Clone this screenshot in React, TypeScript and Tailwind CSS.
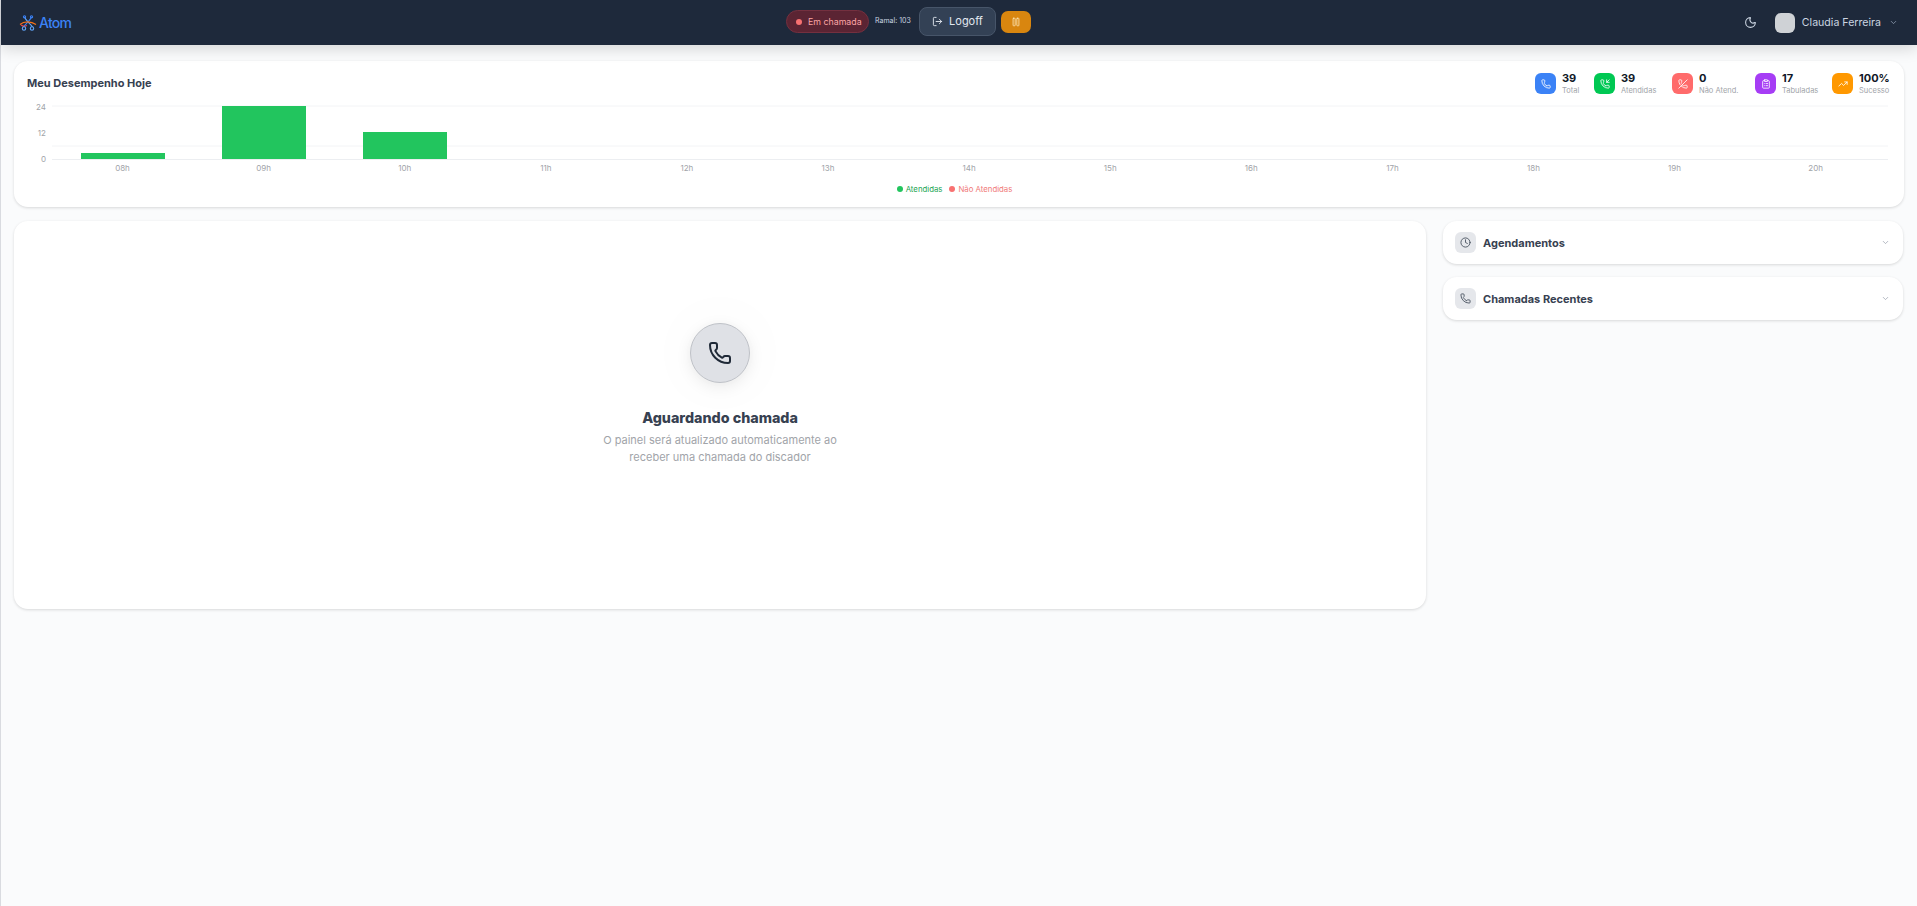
import { Phone, PhoneIncoming, PhoneOff, ClipboardList, TrendingUp, Clock, ChevronDown, Moon, LogOut, Pause } from "lucide-react";

const stats = [
  { v: "39", l: "Total", c: "bg-[#3b82f6]", I: Phone, w: "w-[59px]" },
  { v: "39", l: "Atendidas", c: "bg-[#00c853]", I: PhoneIncoming, w: "w-[78px]" },
  { v: "0", l: "Não Atend.", c: "bg-[#ff6b6b]", I: PhoneOff, w: "w-[83px]" },
  { v: "17", l: "Tabuladas", c: "bg-[#a63df5]", I: ClipboardList, w: "w-[77px]" },
  { v: "100%", l: "Sucesso", c: "bg-[#ff9800]", I: TrendingUp, w: "w-[58px]" },
];

const hours = ["08h", "09h", "10h", "11h", "12h", "13h", "14h", "15h", "16h", "17h", "18h", "19h", "20h"];
const bars = [
  { x: 81, y: 153, h: 6 },
  { x: 222, y: 106, h: 53 },
  { x: 363, y: 132, h: 27 },
];

function Logo() {
  return (
    <svg width="18" height="16" viewBox="0 0 18 16" fill="none" strokeWidth="1.1">
      <path d="M5.5 2 C7 6 11 8 13.5 12" stroke="#60a5fa" />
      <path d="M12.5 2 C11 6 7 8 4.5 12" stroke="#3b82f6" />
      <path d="M1 9.5c4-3.5 11-3.5 16 0" stroke="#f97316" />
      <path d="M2 10c2 1.5 4 1.5 6 .5" stroke="#ef4444" />
      <circle cx="5" cy="13.5" r="1.7" stroke="#60a5fa" />
      <circle cx="13" cy="13.5" r="1.7" stroke="#60a5fa" />
      <circle cx="5.5" cy="1.8" r="1.1" stroke="#3b82f6" />
      <circle cx="12.5" cy="1.8" r="1.1" stroke="#3b82f6" />
    </svg>
  );
}

function Chart() {
  return (
    <svg width="1864" height="84" viewBox="0 0 1864 84" className="block" style={{ fontFamily: "Inter, sans-serif" }}>
      <g transform="translate(-27 -100)">
        <line x1="52" x2="1888" y1="106" y2="106" stroke="#f3f4f6" />
        <line x1="52" x2="1888" y1="146" y2="146" stroke="#f3f4f6" />
        <line x1="52" x2="1888" y1="159.5" y2="159.5" stroke="#eceef1" />
        {bars.map((b) => (
          <rect key={b.x} x={b.x} y={b.y} width="84" height={b.h} fill="#22c55e" />
        ))}
        <text x="46" y="110" textAnchor="end" fontSize="8" fill="#a1a4a9">24</text>
        <text x="46" y="136" textAnchor="end" fontSize="8" fill="#a1a4a9">12</text>
        <text x="46" y="162" textAnchor="end" fontSize="8" fill="#a1a4a9">0</text>
        {hours.map((h, i) => (
          <text key={h} x={122.5 + i * 141.1} y="171" textAnchor="middle" fontSize="8" fill="#a1a4a9">{h}</text>
        ))}
      </g>
    </svg>
  );
}

export default function App() {
  return (
    <div className="min-h-[906px] bg-[#fafbfc] border-l border-l-[#d9dbe0] font-['Inter',sans-serif] text-[#1f2937]">
      <header className="relative h-[45px] bg-[#1e293b] shadow-[0_4px_14px_rgba(0,0,0,0.15)] flex items-center justify-between pl-[18px] pr-[19px]">
        <div className="flex items-center gap-[2px] w-[300px]">
          <Logo />
          <span className="text-[14px] font-medium tracking-[-0.7px] text-[#3b82f6] leading-none">Atom</span>
        </div>
        <div className="absolute left-[785px] top-[7px] flex items-center">
          <div className="flex items-center gap-[6px] h-[23px] w-[83px] pl-[9px] rounded-full bg-[#5b2433] border border-[#74303f] text-[8.8px] text-[#fca5a5] whitespace-nowrap">
            <span className="w-[6px] h-[6px] rounded-full bg-[#f87171] shrink-0"></span>
            Em chamada
          </div>
          <span className="ml-[6px] text-[7px] text-[#cbd5e1] w-[38px] whitespace-nowrap">Ramal: 103</span>
          <div className="flex items-center justify-center gap-[6px] ml-[6px] w-[77px] h-[29px] rounded-[8px] bg-[#334155] border border-[#475569] text-[11px] text-[#e2e8f0]">
            <LogOut size={11} />
            Logoff
          </div>
          <div className="ml-[5px] w-[30px] h-[22px] rounded-[7px] bg-[#d9860f] flex items-center justify-center">
            <Pause size={10} className="text-[#fde6b8]" />
          </div>
        </div>
        <div className="flex items-center">
          <Moon size={13} className="text-[#cbd5e1]" />
          <div className="ml-[18px] w-[20px] h-[20px] rounded-[6px] bg-[#cfd2d6]"></div>
          <span className="ml-[7px] text-[10.6px] text-[#cbd5e1]">Claudia Ferreira</span>
          <ChevronDown size={9} className="ml-[8px] text-[#94a3b8]" />
        </div>
      </header>

      <main className="pt-[16px] pl-[13px] pr-[13px]">
        <section className="h-[146px] bg-white rounded-[14px] shadow-[0_1px_3px_rgba(0,0,0,0.14)] pt-[11px] pl-[13px] pr-[12px]">
          <div className="flex items-start justify-between h-[28px]">
            <h2 className="mt-[4px] text-[11px] font-bold text-[#374151] leading-[14px]">Meu Desempenho Hoje</h2>
            <div className="flex mr-[2px] mt-[1px]">
              {stats.map((s) => (
                <div key={s.l} className={`flex ${s.w}`}>
                  <div className={`w-[21px] h-[21px] rounded-[6px] flex items-center justify-center ${s.c}`}>
                    <s.I size={10} className="text-white" />
                  </div>
                  <div className="ml-[6px]">
                    <div className="text-[11px] font-bold leading-[13px] text-[#111827] mt-[-1px]">{s.v}</div>
                    <div className="text-[7.5px] leading-[10px] mt-[1px] text-[#a1a4a9] whitespace-nowrap">{s.l}</div>
                  </div>
                </div>
              ))}
            </div>
          </div>
          <Chart />
          <div className="flex items-center justify-center gap-[7px] pr-[10px] text-[7.8px] leading-[10px]">
            <span className="flex items-center gap-[3px] text-[#22a553]">
              <span className="w-[6px] h-[6px] rounded-full bg-[#22c55e]"></span>Atendidas
            </span>
            <span className="flex items-center gap-[3px] text-[#f07a7a]">
              <span className="w-[6px] h-[6px] rounded-full bg-[#f87171]"></span>Não Atendidas
            </span>
          </div>
        </section>

        <div className="flex items-start gap-[17px] mt-[14px]">
          <section className="w-[1412px] h-[388px] bg-white rounded-[14px] shadow-[0_1px_3px_rgba(0,0,0,0.14)] flex flex-col items-center pt-[102px]">
            <div className="w-[60px] h-[60px] rounded-full bg-[#dfe1e6] border border-[#bfc2c8] shadow-[0_4px_16px_rgba(0,0,0,0.08),0_0_70px_rgba(0,0,0,0.035)] flex items-center justify-center">
              <Phone size={24} className="text-[#1f2937]" />
            </div>
            <h3 className="mt-[26px] text-[14.3px] font-extrabold leading-[18px] text-[#374151]">Aguardando chamada</h3>
            <p className="mt-[5px] w-[260px] text-center text-[11px] leading-[17px] text-[#a1a4a9]">
              O painel será atualizado automaticamente ao receber uma chamada do discador
            </p>
          </section>
          <aside className="w-[460px] flex flex-col gap-[13px]">
            {[
              { t: "Agendamentos", I: Clock },
              { t: "Chamadas Recentes", I: Phone },
            ].map((p) => (
              <div key={p.t} className="h-[43px] bg-white rounded-[14px] shadow-[0_1px_3px_rgba(0,0,0,0.14)] flex items-center pl-[12px] pr-[13px]">
                <div className="w-[21px] h-[21px] rounded-[6px] bg-[#e5e7eb] flex items-center justify-center">
                  <p.I size={11} className="text-[#4b5563]" />
                </div>
                <span className="ml-[7px] mt-[1px] text-[11px] font-bold text-[#374151]">{p.t}</span>
                <ChevronDown size={9} className="ml-auto text-[#9ca3af]" />
              </div>
            ))}
          </aside>
        </div>
      </main>
    </div>
  );
}
